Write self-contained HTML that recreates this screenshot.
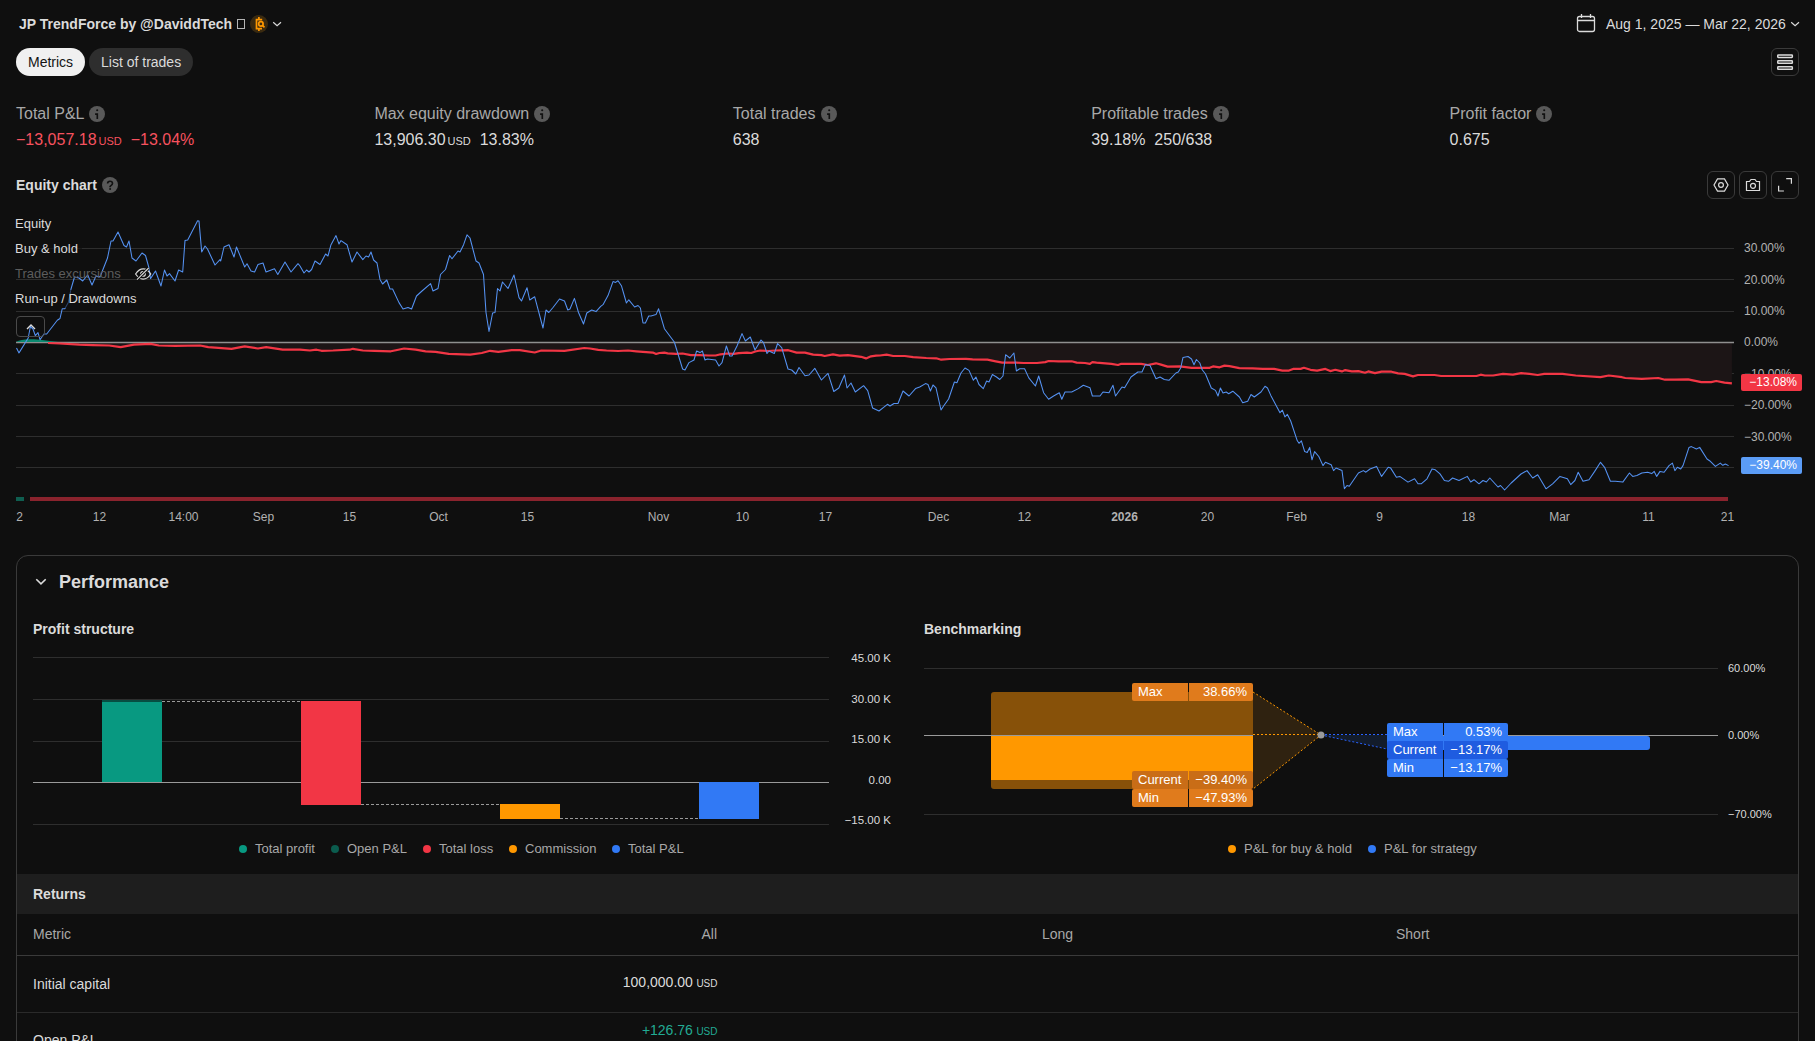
<!DOCTYPE html>
<html><head><meta charset="utf-8"><style>
*{box-sizing:border-box;margin:0;padding:0}
html,body{width:1815px;height:1041px;overflow:hidden;background:#0f0f0f;font-family:"Liberation Sans",sans-serif;color:#dbdbdb}
.a{position:absolute;white-space:nowrap}
.title{left:19px;top:15px;font-size:14px;font-weight:bold;color:#dbdbdb;line-height:18px}
.tab{top:48px;height:28px;border-radius:14px;font-size:14px;line-height:28px;padding:0 12px}
.tab1{left:16px;width:69px;background:#f0f0f0;color:#131313}
.tab2{left:89px;width:104px;background:#2e2e2e;color:#dbdbdb}
.mlabel{top:104px;font-size:16px;line-height:20px;color:#a8a8a8}
.mval{top:130px;font-size:16px;line-height:20px;color:#dbdbdb}
.usd{font-size:11px;padding-left:2px}
.red{color:#f7525f}
.info{display:inline-block;width:16px;height:16px;border-radius:50%;background:#595959;vertical-align:-3px;margin-left:5px;position:relative}
.ylab{left:1744px;font-size:12px;line-height:14px;color:#b2b2b2}
.xlab{top:510px;font-size:12px;line-height:14px;color:#b2b2b2;transform:translateX(calc(-50% + 0.5px))}
.leg{left:13px;padding:1px 4px 1px 2px;font-size:13px;line-height:16px;color:#dbdbdb;background:rgba(15,15,15,0.6)}
.ibtn{top:171px;width:28px;height:28px;border:1px solid #3a3a3a;border-radius:6px}
.axk{font-size:11px;line-height:12px;color:#dbdbdb;text-align:right}
.lg{font-size:13px;line-height:16px;color:#a8a8a8}
.dot{display:inline-block;width:8px;height:8px;border-radius:50%;margin-right:8px;vertical-align:0px}
.tag{height:18px;font-size:13px;line-height:18px;color:#ffffff}
</style></head><body>
<div class="a title">JP TrendForce by @DaviddTech <span style="display:inline-block;width:8px;height:10px;border:1px solid #b4b4b4;vertical-align:0px;margin-left:1px"></span></div>
<div class="a" style="left:250px;top:15px;width:18px;height:18px;border-radius:50%;background:#3a2a10"></div>
<svg class="a" style="left:250px;top:15px" width="18" height="18" viewBox="0 0 18 18"><g fill="none" stroke="#ff9800" stroke-width="1.7"><path d="M8.9 2v3M8.9 13.5v2.6M12.2 4.7H6.5v9h5.5"/><circle cx="10.9" cy="8.9" r="2.2"/><path d="M12.5 10.5l2 1.8"/></g></svg>
<svg class="a" style="left:272px;top:19px" width="10" height="10" viewBox="0 0 10 10"><path d="M1.2 3.2l3.9 3.6 3.9-3.6" fill="none" stroke="#dbdbdb" stroke-width="1.2"/></svg>

<svg class="a" style="left:1576px;top:13px" width="20" height="20" viewBox="0 0 20 20"><g fill="none" stroke="#dbdbdb" stroke-width="1.3"><rect x="1.5" y="3.5" width="17" height="15" rx="2"/><path d="M1.5 7.5h17M5.5 1v4M14.5 1v4"/></g></svg>
<div class="a" style="left:1606px;top:15px;font-size:14px;line-height:18px;color:#dbdbdb">Aug 1, 2025 — Mar 22, 2026</div>
<svg class="a" style="left:1790px;top:19px" width="10" height="10" viewBox="0 0 10 10"><path d="M1.2 3.2l3.9 3.6 3.9-3.6" fill="none" stroke="#dbdbdb" stroke-width="1.2"/></svg>

<div class="a tab tab1">Metrics</div>
<div class="a tab tab2">List of trades</div>
<div class="a" style="left:1771px;top:48px;width:28px;height:28px;border:1px solid #3a3a3a;border-radius:6px"></div>
<svg class="a" style="left:1775px;top:52px" width="20" height="20" viewBox="0 0 20 20"><g fill="none" stroke="#dbdbdb" stroke-width="1.5"><rect x="2.75" y="2.95" width="14.6" height="2.5" rx="0.6"/><rect x="2.75" y="8.85" width="14.6" height="2.5" rx="0.6"/><rect x="2.75" y="14.8" width="14.6" height="2.5" rx="0.6"/></g></svg>
<div class="a mlabel" style="left:16px">Total P&amp;L<span class="info"><svg style="position:absolute;left:0;top:0" width="16" height="16" viewBox="0 0 16 16"><circle cx="8.2" cy="4.2" r="1.05" fill="#111"/><path d="M6.1 8.1h2.2v4.8" fill="none" stroke="#111" stroke-width="1.65"/></svg></span></div>
<div class="a mval" style="left:16px"><span class="red">−13,057.18<span class="usd">USD</span>&nbsp; −13.04%</span></div>
<div class="a mlabel" style="left:374.4px">Max equity drawdown<span class="info"><svg style="position:absolute;left:0;top:0" width="16" height="16" viewBox="0 0 16 16"><circle cx="8.2" cy="4.2" r="1.05" fill="#111"/><path d="M6.1 8.1h2.2v4.8" fill="none" stroke="#111" stroke-width="1.65"/></svg></span></div>
<div class="a mval" style="left:374.4px">13,906.30<span class="usd">USD</span>&nbsp; 13.83%</div>
<div class="a mlabel" style="left:732.8px">Total trades<span class="info"><svg style="position:absolute;left:0;top:0" width="16" height="16" viewBox="0 0 16 16"><circle cx="8.2" cy="4.2" r="1.05" fill="#111"/><path d="M6.1 8.1h2.2v4.8" fill="none" stroke="#111" stroke-width="1.65"/></svg></span></div>
<div class="a mval" style="left:732.8px">638</div>
<div class="a mlabel" style="left:1091.2px">Profitable trades<span class="info"><svg style="position:absolute;left:0;top:0" width="16" height="16" viewBox="0 0 16 16"><circle cx="8.2" cy="4.2" r="1.05" fill="#111"/><path d="M6.1 8.1h2.2v4.8" fill="none" stroke="#111" stroke-width="1.65"/></svg></span></div>
<div class="a mval" style="left:1091.2px">39.18%&nbsp; 250/638</div>
<div class="a mlabel" style="left:1449.6px">Profit factor<span class="info"><svg style="position:absolute;left:0;top:0" width="16" height="16" viewBox="0 0 16 16"><circle cx="8.2" cy="4.2" r="1.05" fill="#111"/><path d="M6.1 8.1h2.2v4.8" fill="none" stroke="#111" stroke-width="1.65"/></svg></span></div>
<div class="a mval" style="left:1449.6px">0.675</div>
<div class="a" style="left:16px;top:176px;font-size:14px;font-weight:bold;line-height:18px;color:#dbdbdb">Equity chart</div>
<div class="a" style="left:102px;top:177px;width:16px;height:16px;border-radius:50%;background:#595959"></div>
<svg class="a" style="left:102px;top:177px" width="16" height="16" viewBox="0 0 16 16"><path d="M5.6 6.6c0-1.5 1-2.3 2.4-2.3s2.5.8 2.5 2.1c0 1.6-1.6 1.8-2.4 3v.9" fill="none" stroke="#111" stroke-width="1.6"/><circle cx="8.1" cy="12" r="1" fill="#111"/></svg>
<div class="a ibtn" style="left:1707px"></div><div class="a ibtn" style="left:1739px"></div><div class="a ibtn" style="left:1771px"></div>
<svg class="a" style="left:1711px;top:175px" width="20" height="20" viewBox="0 0 20 20"><g fill="none" stroke="#dbdbdb" stroke-width="1.2"><path d="M6.5 3.9h7l3.5 6.1-3.5 6.1h-7L3 10z"/><circle cx="10" cy="10" r="2.4"/></g></svg>
<svg class="a" style="left:1743px;top:175px" width="20" height="20" viewBox="0 0 20 20"><g fill="none" stroke="#dbdbdb" stroke-width="1.2"><path d="M3.5 6.5h3l1.5-2h4l1.5 2h3v9h-13z"/><circle cx="10" cy="10.8" r="2.5"/></g></svg>
<svg class="a" style="left:1775px;top:175px" width="20" height="20" viewBox="0 0 20 20"><g fill="none" stroke="#dbdbdb" stroke-width="1.2"><path d="M11.2 3.6h5.2v5.2M8.9 16h-5.3v-5.2"/></g></svg>
<svg class="a" style="left:0;top:0" width="1815" height="541" viewBox="0 0 1815 541">
<line x1="16" y1="248.5" x2="1734" y2="248.5" stroke="#2e2e2e" stroke-width="1"/><line x1="16" y1="279.5" x2="1734" y2="279.5" stroke="#2e2e2e" stroke-width="1"/><line x1="16" y1="311.5" x2="1734" y2="311.5" stroke="#2e2e2e" stroke-width="1"/><line x1="16" y1="373.5" x2="1734" y2="373.5" stroke="#2e2e2e" stroke-width="1"/><line x1="16" y1="405.5" x2="1734" y2="405.5" stroke="#2e2e2e" stroke-width="1"/><line x1="16" y1="436.5" x2="1734" y2="436.5" stroke="#2e2e2e" stroke-width="1"/><line x1="16" y1="467.5" x2="1734" y2="467.5" stroke="#2e2e2e" stroke-width="1"/>
<path d="M48.0,342.0 L48.0,343.0 L59.6,343.5 L79.4,344.7 L92.6,345.2 L109.2,345.5 L120.7,347.2 L134.0,344.7 L150.5,343.9 L158.8,345.5 L175.3,345.9 L200.1,345.5 L208.3,347.2 L231.5,348.8 L244.7,346.4 L257.9,348.5 L266.2,347.2 L282.7,349.7 L300.0,349.7 L309.9,350.5 L316.5,349.7 L321.5,350.8 L333.1,350.5 L349.6,349.7 L352.9,348.8 L362.8,350.5 L374.4,350.8 L390.9,351.3 L395.9,350.2 L404.1,348.5 L415.7,349.7 L425.6,351.3 L435.5,351.8 L448.8,353.8 L470.2,354.6 L481.8,353.0 L490.1,350.8 L498.3,351.8 L511.6,350.2 L519.8,350.2 L534.7,352.5 L541.3,350.5 L564.5,350.8 L584.3,348.0 L590.0,348.5 L598.3,349.8 L606.5,350.5 L618.1,351.0 L628.0,350.5 L636.3,351.3 L646.2,352.1 L652.8,352.6 L656.1,354.0 L659.4,353.0 L664.4,352.6 L667.7,353.3 L676.0,353.8 L682.6,353.5 L690.8,355.1 L699.1,355.1 L709.0,355.5 L715.6,355.5 L720.6,354.3 L727.2,353.5 L733.8,353.8 L738.8,353.1 L747.0,352.6 L751.2,353.0 L755.3,351.5 L760.2,350.5 L768.5,351.0 L775.1,350.5 L788.3,350.2 L796.6,352.6 L804.9,352.6 L813.2,354.6 L821.4,355.1 L824.7,356.0 L833.0,354.3 L839.6,355.6 L847.9,355.1 L861.1,356.8 L866.0,358.4 L871.0,356.3 L876.0,355.6 L880.0,355.5 L886.6,354.7 L893.2,356.0 L904.8,356.0 L913.1,357.2 L926.3,358.0 L936.2,358.3 L941.2,359.7 L949.4,359.0 L966.0,358.8 L972.6,359.3 L987.4,359.7 L995.7,361.3 L1002.3,362.6 L1015.5,362.6 L1023.8,363.0 L1037.0,363.0 L1045.3,362.1 L1048.6,361.0 L1058.5,361.3 L1071.7,361.3 L1076.7,362.6 L1085.0,363.0 L1089.9,363.8 L1092.4,362.1 L1096.5,362.6 L1111.4,363.8 L1118.0,365.0 L1121.3,363.8 L1141.2,363.8 L1147.8,365.0 L1156.0,363.3 L1161.0,364.6 L1167.6,366.6 L1179.9,366.4 L1191.5,367.8 L1203.1,367.8 L1209.7,367.8 L1213.0,366.4 L1219.6,367.3 L1224.5,365.6 L1229.5,366.1 L1239.4,368.1 L1252.6,368.4 L1262.6,368.9 L1274.1,368.9 L1282.4,370.6 L1289.0,370.6 L1293.1,368.9 L1300.6,368.9 L1303.9,367.8 L1310.5,369.8 L1317.1,370.6 L1325.4,368.9 L1330.3,371.1 L1335.3,369.8 L1341.9,371.4 L1345.2,370.1 L1351.8,371.4 L1358.4,371.1 L1365.0,372.7 L1368.3,371.4 L1375.0,373.1 L1381.6,371.7 L1391.5,371.7 L1398.1,373.4 L1404.7,373.9 L1413.0,376.4 L1417.9,375.0 L1434.5,375.0 L1441.1,376.0 L1460.0,376.0 L1476.5,376.0 L1480.7,374.7 L1484.8,375.5 L1493.1,375.5 L1503.0,373.9 L1512.9,374.7 L1521.2,373.1 L1529.4,373.9 L1537.7,375.0 L1544.3,373.9 L1562.5,373.9 L1575.7,375.5 L1600.5,377.2 L1608.8,375.5 L1622.0,377.2 L1625.3,378.0 L1641.8,378.8 L1658.3,378.0 L1665.0,379.7 L1674.9,379.7 L1688.1,379.3 L1701.3,382.1 L1711.2,382.1 L1716.2,381.0 L1724.5,382.6 L1731.9,383.3 L1732.0,342.0 Z" fill="#1c1516"/>
<line x1="16" y1="342.5" x2="1734" y2="342.5" stroke="#8f8f8f" stroke-width="1.3"/>
<path d="M16,342 C20,339.5 26,338.8 34,339.3 S50,341.2 58,342 Z" fill="#0b8a70"/>
<path d="M48.0,343.0 L59.6,343.5 L79.4,344.7 L92.6,345.2 L109.2,345.5 L120.7,347.2 L134.0,344.7 L150.5,343.9 L158.8,345.5 L175.3,345.9 L200.1,345.5 L208.3,347.2 L231.5,348.8 L244.7,346.4 L257.9,348.5 L266.2,347.2 L282.7,349.7 L300.0,349.7 L309.9,350.5 L316.5,349.7 L321.5,350.8 L333.1,350.5 L349.6,349.7 L352.9,348.8 L362.8,350.5 L374.4,350.8 L390.9,351.3 L395.9,350.2 L404.1,348.5 L415.7,349.7 L425.6,351.3 L435.5,351.8 L448.8,353.8 L470.2,354.6 L481.8,353.0 L490.1,350.8 L498.3,351.8 L511.6,350.2 L519.8,350.2 L534.7,352.5 L541.3,350.5 L564.5,350.8 L584.3,348.0 L590.0,348.5 L598.3,349.8 L606.5,350.5 L618.1,351.0 L628.0,350.5 L636.3,351.3 L646.2,352.1 L652.8,352.6 L656.1,354.0 L659.4,353.0 L664.4,352.6 L667.7,353.3 L676.0,353.8 L682.6,353.5 L690.8,355.1 L699.1,355.1 L709.0,355.5 L715.6,355.5 L720.6,354.3 L727.2,353.5 L733.8,353.8 L738.8,353.1 L747.0,352.6 L751.2,353.0 L755.3,351.5 L760.2,350.5 L768.5,351.0 L775.1,350.5 L788.3,350.2 L796.6,352.6 L804.9,352.6 L813.2,354.6 L821.4,355.1 L824.7,356.0 L833.0,354.3 L839.6,355.6 L847.9,355.1 L861.1,356.8 L866.0,358.4 L871.0,356.3 L876.0,355.6 L880.0,355.5 L886.6,354.7 L893.2,356.0 L904.8,356.0 L913.1,357.2 L926.3,358.0 L936.2,358.3 L941.2,359.7 L949.4,359.0 L966.0,358.8 L972.6,359.3 L987.4,359.7 L995.7,361.3 L1002.3,362.6 L1015.5,362.6 L1023.8,363.0 L1037.0,363.0 L1045.3,362.1 L1048.6,361.0 L1058.5,361.3 L1071.7,361.3 L1076.7,362.6 L1085.0,363.0 L1089.9,363.8 L1092.4,362.1 L1096.5,362.6 L1111.4,363.8 L1118.0,365.0 L1121.3,363.8 L1141.2,363.8 L1147.8,365.0 L1156.0,363.3 L1161.0,364.6 L1167.6,366.6 L1179.9,366.4 L1191.5,367.8 L1203.1,367.8 L1209.7,367.8 L1213.0,366.4 L1219.6,367.3 L1224.5,365.6 L1229.5,366.1 L1239.4,368.1 L1252.6,368.4 L1262.6,368.9 L1274.1,368.9 L1282.4,370.6 L1289.0,370.6 L1293.1,368.9 L1300.6,368.9 L1303.9,367.8 L1310.5,369.8 L1317.1,370.6 L1325.4,368.9 L1330.3,371.1 L1335.3,369.8 L1341.9,371.4 L1345.2,370.1 L1351.8,371.4 L1358.4,371.1 L1365.0,372.7 L1368.3,371.4 L1375.0,373.1 L1381.6,371.7 L1391.5,371.7 L1398.1,373.4 L1404.7,373.9 L1413.0,376.4 L1417.9,375.0 L1434.5,375.0 L1441.1,376.0 L1460.0,376.0 L1476.5,376.0 L1480.7,374.7 L1484.8,375.5 L1493.1,375.5 L1503.0,373.9 L1512.9,374.7 L1521.2,373.1 L1529.4,373.9 L1537.7,375.0 L1544.3,373.9 L1562.5,373.9 L1575.7,375.5 L1600.5,377.2 L1608.8,375.5 L1622.0,377.2 L1625.3,378.0 L1641.8,378.8 L1658.3,378.0 L1665.0,379.7 L1674.9,379.7 L1688.1,379.3 L1701.3,382.1 L1711.2,382.1 L1716.2,381.0 L1724.5,382.6 L1731.9,383.3" fill="none" stroke="#f23645" stroke-width="2.2" stroke-linejoin="round"/>
<path d="M16.5,348.0 L19.0,352.9 L28.2,338.0 L30.4,326.5 L33.0,329.0 L35.3,335.7 L38.0,332.6 L40.0,339.7 L44.0,334.0 L46.7,334.0 L57.3,320.3 L60.0,318.5 L62.2,308.8 L64.8,308.8 L68.3,302.6 L71.0,289.0 L74.5,277.0 L79.0,278.0 L82.7,281.0 L87.7,275.0 L92.0,285.0 L96.0,276.0 L100.0,277.0 L107.5,258.0 L111.0,241.0 L113.0,241.0 L118.0,232.0 L124.0,245.5 L126.5,247.0 L129.0,241.0 L132.0,258.0 L136.0,261.0 L142.0,253.0 L145.5,255.5 L149.0,268.0 L150.5,278.6 L155.5,271.0 L161.0,286.0 L164.5,270.0 L167.0,276.0 L169.5,273.6 L175.0,281.0 L178.6,270.0 L182.7,272.0 L185.0,240.6 L187.7,240.0 L197.6,220.7 L199.0,221.0 L201.7,252.0 L205.0,246.0 L207.5,249.0 L215.0,265.0 L220.0,259.6 L220.7,261.0 L224.0,247.0 L229.0,244.7 L234.0,257.0 L236.5,247.0 L244.7,267.0 L247.0,263.7 L251.0,271.0 L254.6,272.0 L258.0,264.5 L263.0,263.0 L266.0,272.0 L274.5,268.7 L277.8,274.5 L285.0,262.0 L291.0,272.0 L298.0,263.7 L300.0,266.0 L304.0,273.0 L306.6,270.0 L309.0,272.0 L311.6,269.5 L315.0,261.0 L320.0,264.5 L325.6,254.0 L328.0,256.0 L331.0,244.7 L336.0,235.6 L339.0,244.0 L341.0,240.6 L347.0,244.7 L352.0,262.0 L357.0,252.0 L362.8,259.6 L366.0,256.0 L368.6,257.0 L371.0,252.0 L373.6,260.0 L377.0,263.0 L380.0,279.4 L382.6,284.0 L386.8,280.0 L390.0,289.0 L392.6,289.0 L399.0,302.6 L403.0,309.0 L408.0,307.5 L411.6,309.0 L416.5,296.0 L422.0,291.0 L430.6,283.6 L433.0,291.0 L438.0,288.5 L440.5,274.5 L445.5,269.5 L449.6,255.5 L452.0,258.8 L458.0,251.0 L460.0,252.0 L463.6,244.7 L467.0,234.8 L470.0,238.0 L476.0,261.0 L479.0,263.0 L483.5,274.5 L486.0,312.5 L489.0,331.5 L492.6,313.0 L495.0,312.5 L497.5,288.5 L500.0,291.0 L502.5,282.0 L508.0,288.5 L514.0,275.0 L519.0,297.6 L521.5,301.0 L527.0,287.7 L529.7,300.0 L534.7,296.8 L543.0,328.0 L546.0,310.0 L548.8,312.5 L553.0,307.5 L559.5,299.0 L564.5,301.0 L567.8,310.0 L570.0,309.0 L574.4,298.4 L578.5,312.5 L583.5,324.0 L586.8,313.0 L591.7,310.0 L596.0,311.6 L600.7,306.4 L603.0,304.7 L608.0,295.6 L613.0,281.6 L615.6,282.4 L618.0,280.7 L621.4,285.7 L626.4,303.0 L628.8,299.8 L634.6,307.0 L638.0,305.5 L640.4,308.0 L643.0,323.0 L645.4,323.0 L648.7,316.0 L651.0,316.0 L656.0,314.6 L658.6,308.8 L664.4,328.7 L674.3,342.0 L682.6,369.0 L685.0,370.0 L689.0,362.6 L694.0,360.0 L696.6,351.0 L700.0,352.6 L702.4,351.0 L705.0,360.0 L707.4,359.0 L715.6,360.0 L719.0,366.0 L722.0,362.6 L726.4,346.0 L729.7,356.0 L732.0,356.0 L737.0,346.0 L742.0,333.6 L745.4,341.0 L750.3,337.0 L755.0,350.0 L761.0,340.0 L763.5,342.7 L767.0,353.5 L769.0,351.0 L774.3,353.5 L777.6,343.5 L781.7,347.7 L788.0,369.0 L791.7,370.0 L795.8,374.0 L799.0,367.5 L805.0,375.8 L809.0,375.0 L814.8,368.3 L821.4,380.0 L828.0,373.3 L833.8,391.5 L838.8,388.0 L844.5,375.0 L847.0,388.0 L851.0,383.0 L855.3,392.0 L863.6,385.7 L867.7,390.7 L872.6,408.0 L879.0,411.0 L883.3,407.6 L887.4,404.3 L890.0,406.0 L894.0,403.5 L898.0,403.5 L903.0,391.0 L909.0,396.0 L915.5,388.6 L919.7,387.0 L925.5,383.6 L928.0,384.5 L930.4,391.0 L933.0,385.0 L936.0,387.8 L941.0,410.0 L943.6,406.0 L948.6,399.0 L954.4,382.0 L956.9,382.8 L961.0,373.0 L965.0,368.0 L969.0,370.4 L973.4,380.3 L975.9,377.0 L979.0,384.5 L983.3,388.6 L986.6,381.0 L989.0,382.0 L992.4,374.5 L996.5,377.0 L999.8,379.5 L1003.0,376.0 L1005.6,354.7 L1009.8,358.0 L1013.9,353.0 L1016.4,371.0 L1019.7,368.8 L1024.6,368.8 L1028.8,377.9 L1035.4,386.0 L1038.7,376.0 L1043.6,392.7 L1048.6,399.3 L1053.6,396.0 L1059.3,392.7 L1061.8,399.3 L1065.0,392.0 L1071.7,392.0 L1078.3,388.6 L1083.3,385.3 L1090.0,387.8 L1092.4,396.0 L1100.0,396.0 L1103.0,392.0 L1109.0,392.7 L1113.0,385.3 L1115.5,396.0 L1122.0,387.0 L1124.6,387.8 L1131.0,377.0 L1137.9,372.0 L1142.0,372.0 L1145.3,364.6 L1150.0,365.5 L1156.0,378.7 L1160.0,377.0 L1164.3,379.5 L1169.0,380.3 L1175.9,373.0 L1178.3,372.0 L1180.7,368.0 L1183.0,357.4 L1188.0,356.5 L1191.5,359.0 L1194.0,364.8 L1196.4,359.5 L1199.8,363.0 L1202.2,369.8 L1205.5,374.0 L1211.3,388.0 L1215.5,390.4 L1218.0,396.0 L1220.4,388.0 L1223.0,393.0 L1226.2,392.0 L1228.7,393.7 L1232.8,391.2 L1239.4,397.0 L1242.7,402.8 L1247.7,401.2 L1251.0,394.5 L1254.3,397.0 L1261.0,392.0 L1265.0,386.3 L1267.5,388.0 L1270.8,395.4 L1280.0,412.7 L1282.4,410.2 L1284.9,416.9 L1287.4,414.4 L1290.7,421.0 L1297.3,440.8 L1299.0,443.3 L1301.4,440.8 L1304.7,451.6 L1307.2,452.4 L1309.7,447.4 L1312.0,459.8 L1314.6,451.6 L1318.8,456.5 L1323.0,465.6 L1325.4,462.3 L1331.2,464.8 L1333.6,470.6 L1336.0,468.0 L1342.0,470.6 L1344.4,488.8 L1347.0,485.5 L1349.3,486.3 L1358.4,473.0 L1363.4,470.6 L1365.9,472.2 L1370.0,469.0 L1376.6,466.4 L1381.6,476.4 L1388.2,467.3 L1390.7,468.1 L1396.4,477.2 L1399.8,476.4 L1408.0,482.1 L1414.6,478.8 L1418.0,483.8 L1421.2,483.8 L1427.0,478.8 L1432.0,468.9 L1435.3,469.8 L1440.0,473.9 L1444.4,480.5 L1448.5,481.3 L1452.6,478.0 L1459.0,480.5 L1467.4,476.4 L1470.7,482.0 L1474.0,479.7 L1479.0,483.8 L1483.0,480.5 L1486.4,482.0 L1489.8,478.0 L1498.0,487.0 L1500.5,485.5 L1504.6,490.0 L1511.2,483.0 L1521.0,474.0 L1527.0,470.6 L1532.7,478.0 L1537.7,474.7 L1546.0,488.8 L1552.6,483.8 L1560.0,476.4 L1567.4,478.8 L1570.7,484.6 L1574.9,480.5 L1578.2,472.2 L1583.0,481.3 L1589.0,479.7 L1594.7,471.4 L1600.5,462.3 L1604.6,467.3 L1610.4,481.3 L1615.4,481.3 L1622.8,482.1 L1629.4,473.0 L1632.7,476.4 L1636.9,475.5 L1641.8,473.0 L1647.6,472.2 L1651.7,473.6 L1654.2,471.4 L1656.7,476.4 L1660.0,471.4 L1664.1,472.2 L1669.0,465.6 L1672.4,463.1 L1674.9,470.6 L1677.4,467.3 L1680.7,469.0 L1683.0,465.6 L1689.0,447.4 L1691.4,446.6 L1696.4,449.0 L1699.7,447.4 L1707.0,459.0 L1709.6,460.7 L1715.4,466.4 L1720.3,463.1 L1722.8,465.3 L1725.3,464.0 L1728.6,465.6" fill="none" stroke="#5592f2" stroke-width="1.05" stroke-linejoin="round"/>
<rect x="16" y="497" width="8" height="4" fill="#0f5e50"/>
<rect x="30" y="497" width="1698" height="4" fill="#8a232d"/>
</svg>
<div class="a leg" style="top:215px;color:#dbdbdb">Equity</div>
<div class="a leg" style="top:240px;color:#dbdbdb">Buy &amp; hold</div>
<div class="a leg" style="top:265px;color:#5d5d5d;background:none">Trades excursions</div>
<div class="a leg" style="top:290px;color:#dbdbdb">Run-up / Drawdowns</div>
<svg class="a" style="left:134px;top:265px" width="18" height="16" viewBox="0 0 18 16"><g fill="none"><path d="M1.6 9c2.2-3.3 4.7-5.1 7.6-5.1s5.4 1.8 7.6 5.1c-2.2 3.3-4.7 5.1-7.6 5.1s-5.4-1.8-7.6-5.1z" stroke="#dbdbdb" stroke-width="1.2"/><circle cx="9" cy="8.9" r="2.3" stroke="#dbdbdb" stroke-width="1.2"/><path d="M3 14.6L14.7 3" stroke="#0f0f0f" stroke-width="3"/><path d="M3 14.6L14.7 3" stroke="#dbdbdb" stroke-width="1.1"/></g></svg>
<div class="a" style="left:16px;top:316px;width:29px;height:21px;border:1px solid #4a4a4a;border-radius:4px"></div>
<svg class="a" style="left:24px;top:322px" width="14" height="10" viewBox="0 0 14 10"><path d="M3 7l4-4 4 4" fill="none" stroke="#dbdbdb" stroke-width="1.4"/></svg>
<div class="a ylab" style="top:241px">30.00%</div>
<div class="a ylab" style="top:272.5px">20.00%</div>
<div class="a ylab" style="top:304px">10.00%</div>
<div class="a ylab" style="top:335px">0.00%</div>
<div class="a ylab" style="top:366.5px">−10.00%</div>
<div class="a ylab" style="top:398px">−20.00%</div>
<div class="a ylab" style="top:429.5px">−30.00%</div>
<div class="a" style="left:1741px;top:374px;width:61px;height:17px;background:#f23645;border-radius:2px;color:#fff;font-size:12px;line-height:17px;text-align:right;padding-right:5px">−13.08%</div>
<div class="a" style="left:1741px;top:457px;width:61px;height:17px;background:#5b9cf6;border-radius:2px;color:#fff;font-size:12px;line-height:17px;text-align:right;padding-right:5px">−39.40%</div>
<div class="a xlab" style="left:19px">2</div>
<div class="a xlab" style="left:99px">12</div>
<div class="a xlab" style="left:183px">14:00</div>
<div class="a xlab" style="left:263px">Sep</div>
<div class="a xlab" style="left:349px">15</div>
<div class="a xlab" style="left:438px">Oct</div>
<div class="a xlab" style="left:527px">15</div>
<div class="a xlab" style="left:658px">Nov</div>
<div class="a xlab" style="left:742px">10</div>
<div class="a xlab" style="left:825px">17</div>
<div class="a xlab" style="left:938px">Dec</div>
<div class="a xlab" style="left:1024px">12</div>
<div class="a xlab" style="left:1124px"><b>2026</b></div>
<div class="a xlab" style="left:1207px">20</div>
<div class="a xlab" style="left:1296px">Feb</div>
<div class="a xlab" style="left:1379px">9</div>
<div class="a xlab" style="left:1468px">18</div>
<div class="a xlab" style="left:1559px">Mar</div>
<div class="a xlab" style="left:1648px">11</div>
<div class="a xlab" style="left:1727px">21</div>
<div class="a" style="left:16px;top:555px;width:1783px;height:600px;border:1px solid #3a3a3a;border-radius:12px"></div>
<svg class="a" style="left:34px;top:576px" width="14" height="12" viewBox="0 0 14 12"><path d="M2.3 3.2l4.7 4.6 4.7-4.6" fill="none" stroke="#dbdbdb" stroke-width="1.6"/></svg>
<div class="a" style="left:59px;top:571px;font-size:18px;font-weight:bold;line-height:22px;color:#dbdbdb">Performance</div>
<div class="a" style="left:33px;top:620px;font-size:14px;font-weight:bold;line-height:18px;color:#dbdbdb">Profit structure</div>
<div class="a" style="left:924px;top:620px;font-size:14px;font-weight:bold;line-height:18px;color:#dbdbdb">Benchmarking</div>
<svg class="a" style="left:0;top:600px" width="1815" height="280" viewBox="0 600 1815 280"><line x1="33" y1="657.5" x2="829" y2="657.5" stroke="#2e2e2e"/><line x1="33" y1="699.5" x2="829" y2="699.5" stroke="#2e2e2e"/><line x1="33" y1="741.5" x2="829" y2="741.5" stroke="#2e2e2e"/><line x1="33" y1="824.5" x2="829" y2="824.5" stroke="#2e2e2e"/><line x1="33" y1="782.5" x2="829" y2="782.5" stroke="#9a9a9a"/><rect x="102" y="700" width="60" height="2" fill="#064e42"/><rect x="102" y="702" width="60" height="80" fill="#089981"/><rect x="301" y="701" width="60" height="104" fill="#f23645"/><rect x="500" y="804" width="60" height="15" fill="#ff9800"/><rect x="699" y="782" width="60" height="37" fill="#3179f5"/><g stroke="#9a9a9a" stroke-dasharray="3,2"><line x1="162" y1="701.5" x2="301" y2="701.5"/><line x1="361" y1="804.5" x2="500" y2="804.5"/><line x1="560" y1="818.5" x2="699" y2="818.5"/></g><line x1="924" y1="668.5" x2="1718" y2="668.5" stroke="#2e2e2e"/><line x1="924" y1="814.5" x2="1718" y2="814.5" stroke="#2e2e2e"/><rect x="991" y="692" width="262" height="97" rx="3" fill="#875109"/><rect x="991" y="736" width="262" height="44" fill="#ff9800"/><line x1="924" y1="735.5" x2="1718" y2="735.5" stroke="#9a9a9a"/><path d="M1253,692 L1321,735 L1253,789 Z" fill="#2f2210"/><g stroke="#ff9800" stroke-dasharray="2,2" fill="none"><path d="M1253,692 L1321,735 L1253,789"/><line x1="1253" y1="734.5" x2="1321" y2="734.5"/></g><path d="M1321,735 L1387,735 L1387,749 Z" fill="#131c2b"/><g stroke="#2962ff" stroke-dasharray="2,2" fill="none"><path d="M1321,735 L1387,749"/><line x1="1321" y1="734.5" x2="1387" y2="734.5"/></g><rect x="1387" y="736" width="263" height="14" rx="3" fill="#3179f5"/><circle cx="1321" cy="735" r="3.5" fill="#9a9a9a"/></svg>
<div class="a axk" style="left:820px;width:71px;top:652px;font-size:11.5px">45.00 K</div>
<div class="a axk" style="left:820px;width:71px;top:693px;font-size:11.5px">30.00 K</div>
<div class="a axk" style="left:820px;width:71px;top:733px;font-size:11.5px">15.00 K</div>
<div class="a axk" style="left:820px;width:71px;top:774px;font-size:11.5px">0.00</div>
<div class="a axk" style="left:820px;width:71px;top:814px;font-size:11.5px">−15.00 K</div>
<div class="a axk" style="left:1728px;top:662px;text-align:left">60.00%</div>
<div class="a axk" style="left:1728px;top:729px;text-align:left">0.00%</div>
<div class="a axk" style="left:1728px;top:808px;text-align:left">−70.00%</div>
<div class="a tag" style="left:1132px;top:683px;width:56px;background:#e07b1c;padding-left:6px;border-radius:2px 0 0 2px">Max</div><div class="a tag" style="left:1189px;top:683px;width:64px;background:#e07b1c;text-align:right;padding-right:6px;border-radius:0 2px 2px 0">38.66%</div>
<div class="a tag" style="left:1132px;top:771px;width:56px;background:#c96d17;padding-left:6px;border-radius:2px 0 0 2px">Current</div><div class="a tag" style="left:1189px;top:771px;width:64px;background:#c96d17;text-align:right;padding-right:6px;border-radius:0 2px 2px 0">−39.40%</div>
<div class="a tag" style="left:1132px;top:789px;width:56px;background:#e07b1c;padding-left:6px;border-radius:2px 0 0 2px">Min</div><div class="a tag" style="left:1189px;top:789px;width:64px;background:#e07b1c;text-align:right;padding-right:6px;border-radius:0 2px 2px 0">−47.93%</div>
<div class="a tag" style="left:1387px;top:723px;width:56px;background:#3179f5;padding-left:6px;border-radius:2px 0 0 2px">Max</div><div class="a tag" style="left:1444px;top:723px;width:64px;background:#3179f5;text-align:right;padding-right:6px;border-radius:0 2px 2px 0">0.53%</div>
<div class="a tag" style="left:1387px;top:741px;width:56px;background:#1f5ce0;padding-left:6px;border-radius:2px 0 0 2px">Current</div><div class="a tag" style="left:1444px;top:741px;width:64px;background:#1f5ce0;text-align:right;padding-right:6px;border-radius:0 2px 2px 0">−13.17%</div>
<div class="a tag" style="left:1387px;top:759px;width:56px;background:#3179f5;padding-left:6px;border-radius:2px 0 0 2px">Min</div><div class="a tag" style="left:1444px;top:759px;width:64px;background:#3179f5;text-align:right;padding-right:6px;border-radius:0 2px 2px 0">−13.17%</div>
<div class="a lg" style="left:239px;top:841px"><span class="dot" style="background:#089981"></span>Total profit</div>
<div class="a lg" style="left:331px;top:841px"><span class="dot" style="background:#0b5c4e"></span>Open P&amp;L</div>
<div class="a lg" style="left:423px;top:841px"><span class="dot" style="background:#f23645"></span>Total loss</div>
<div class="a lg" style="left:509px;top:841px"><span class="dot" style="background:#ff9800"></span>Commission</div>
<div class="a lg" style="left:612px;top:841px"><span class="dot" style="background:#3179f5"></span>Total P&amp;L</div>
<div class="a lg" style="left:1228px;top:841px"><span class="dot" style="background:#ff9800"></span>P&amp;L for buy &amp; hold</div>
<div class="a lg" style="left:1368px;top:841px"><span class="dot" style="background:#3179f5"></span>P&amp;L for strategy</div>
<div class="a" style="left:17px;top:874px;width:1781px;height:40px;background:#1e1e1e"></div>
<div class="a" style="left:33px;top:885px;font-size:14px;font-weight:bold;line-height:18px;color:#dbdbdb">Returns</div>
<div class="a" style="left:33px;top:925px;font-size:14px;line-height:18px;color:#a8a8a8">Metric</div>
<div class="a" style="left:617px;width:100px;text-align:right;top:925px;font-size:14px;line-height:18px;color:#a8a8a8">All</div>
<div class="a" style="left:1042px;top:925px;font-size:14px;line-height:18px;color:#a8a8a8">Long</div>
<div class="a" style="left:1396px;top:925px;font-size:14px;line-height:18px;color:#a8a8a8">Short</div>
<div class="a" style="left:17px;top:955px;width:1781px;height:1px;background:#3a3a3a"></div>
<div class="a" style="left:33px;top:975px;font-size:14px;line-height:18px;color:#dbdbdb">Initial capital</div>
<div class="a" style="left:517.5px;width:200px;text-align:right;top:973px;font-size:14px;line-height:18px;color:#dbdbdb">100,000.00<span class="usd" style="padding-left:3.5px;font-size:10px">USD</span></div>
<div class="a" style="left:17px;top:1012px;width:1781px;height:1px;background:#2a2a2a"></div>
<div class="a" style="left:517.5px;width:200px;text-align:right;top:1021px;font-size:14px;line-height:18px;color:#22ab94">+126.76<span class="usd" style="padding-left:3.5px;font-size:10px">USD</span></div>
<div class="a" style="left:33px;top:1031px;font-size:14px;line-height:18px;color:#dbdbdb">Open P&amp;L</div>
</body></html>
